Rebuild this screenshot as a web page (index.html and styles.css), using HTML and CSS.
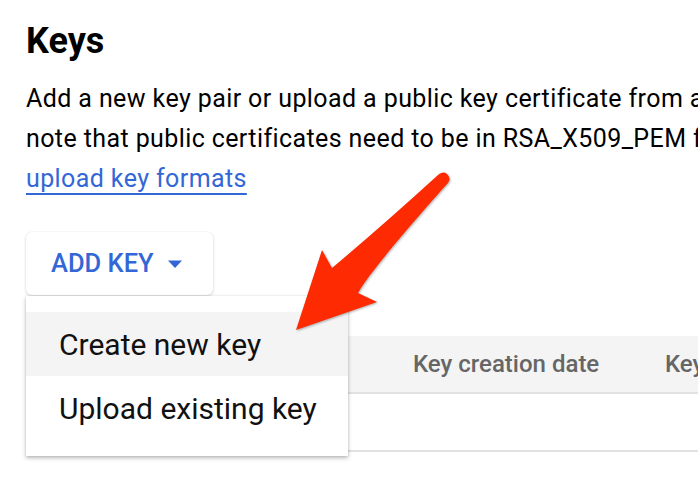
FILE: index.html
```html
<!DOCTYPE html>
<html lang="en">
<head>
<meta charset="utf-8">
<title>Keys</title>
<link rel="stylesheet" href="styles.css">
</head>
<body>
<div class="page">
  <h1 class="title">Keys</h1>
  <p class="desc">
    <span class="line">Add a new key pair or upload a public key certificate from an existing key pair. Please</span>
    <span class="line">note that public certificates need to be in RSA_X509_PEM format. Learn more about</span>
    <span class="line"><a class="link" href="#">upload key formats</a></span>
  </p>
  <div class="actions">
    <button class="add-btn" type="button">
      <span class="add-label">ADD KEY</span>
      <svg class="caret" width="24" height="24" viewBox="0 0 24 24"><path d="M5 8.5h14l-7 7.5z" fill="#3367d6"/></svg>
    </button>
    <div class="menu">
      <div class="menu-item active">Create new key</div>
      <div class="menu-item">Upload existing key</div>
    </div>
  </div>
  <div class="table">
    <div class="row head">
      <div class="cell c1"></div>
      <div class="cell c2">Key creation date</div>
      <div class="cell c3">Key expiration date</div>
    </div>
    <div class="row">
      <div class="cell c1"></div>
      <div class="cell c2"></div>
      <div class="cell c3"></div>
    </div>
  </div>
</div>
<svg class="annot" width="698" height="482" viewBox="0 0 698 482">
  <path d="M296 330 L322 250 L332 268 Q382 226 438 175 A5.5 5.5 0 0 1 448 183 C420 214 368 274 358 293 L377 302 Z" fill="#fe2b02"/>
</svg>
</body>
</html>
```

FILE: styles.css
```css
html, body {
  margin: 0;
  padding: 0;
  background: #ffffff;
}
body {
  width: 698px;
  height: 482px;
  overflow: hidden;
  position: relative;
  font-family: Roboto, "Liberation Sans", Arial, sans-serif;
  color: #000;
}
.page {
  padding-left: 26px;
}
.title {
  margin: 21px 0 0;
  font-size: 36px;
  line-height: 40px;
  font-weight: 700;
  color: #000;
}
.desc {
  margin: 18px 0 0;
  font-size: 25px;
  letter-spacing: 0.4px;
  line-height: 40px;
  color: #000;
  white-space: nowrap;
}
.line {
  display: block;
}
.link {
  color: #3367d6;
  text-decoration: underline;
  text-decoration-thickness: 2px;
  text-underline-offset: 6px;
}
.actions {
  position: relative;
  margin-top: 33px;
  width: 187px;
}
.add-btn {
  display: flex;
  align-items: center;
  gap: 9px;
  width: 187px;
  height: 63px;
  padding: 0 0 0 25px;
  border: none;
  border-radius: 6px;
  background: #fff;
  box-shadow: 0 1px 3px rgba(0, 0, 0, 0.18), 0 0 1px rgba(0, 0, 0, 0.08);
  font-family: Roboto, "Liberation Sans", Arial, sans-serif;
  font-size: 25.5px;
  font-weight: 500;
  color: #3367d6;
  letter-spacing: 0;
  cursor: pointer;
}
.add-label {
  line-height: 1;
}
.caret {
  display: block;
  flex: none;
}
.menu {
  position: absolute;
  z-index: 2;
  left: 0;
  top: 64px;
  width: 322px;
  padding: 16px 0;
  background: #fff;
  box-shadow: 0 2px 4px rgba(0, 0, 0, 0.28), 0 0 2px rgba(0, 0, 0, 0.08);
}
.menu-item {
  height: 64px;
  display: flex;
  align-items: center;
  padding-left: 33px;
  font-size: 30px;
  color: #111;
}
.menu-item.active {
  background: #f4f4f4;
}
.table {
  margin-top: 41px;
  width: 900px;
}
.row {
  display: flex;
  height: 56px;
  border-bottom: 2px solid #e2e2e2;
  align-items: center;
}
.row.head {
  background: #f4f4f4;
}
.cell {
  flex: none;
  white-space: nowrap;
  font-size: 24px;
  font-weight: 500;
  color: #666666;
}
.c1 { width: 387px; }
.c2 { width: 252px; }
.c3 { width: 260px; }
.annot {
  position: absolute;
  left: 0;
  top: 0;
  z-index: 5;
  pointer-events: none;
  filter: drop-shadow(1px 1px 1px rgba(0, 0, 0, 0.3));
}
```
